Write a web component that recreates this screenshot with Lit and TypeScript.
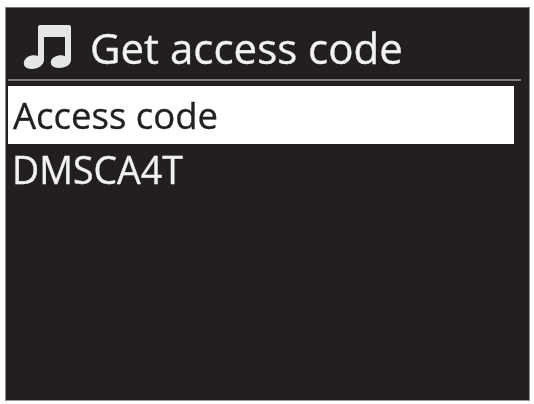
import { LitElement, html, css } from "lit";
import { customElement } from "lit/decorators.js";

@customElement("app-root")
export class AppRoot extends LitElement {
  static styles = css`
    :host { display: block; width: 534px; height: 404px; background: #fff; box-sizing: border-box; padding: 7px 4px 3px 5px; }
    .screen {
      height: 100%; box-sizing: border-box; background: #231f20; color: #f2f2f2;
      border: 1px solid #8a8a8a; border-top-color: #777; border-bottom-color: #999;
      font-family: "Open Sans", "Noto Sans", sans-serif;
      display: flex; flex-direction: column;
      padding: 0 8px 0 2px;
      -webkit-text-stroke: 0.35px currentColor;
    }
    .head { height: 71px; display: flex; align-items: center; gap: 17px; padding-left: 15px; box-sizing: border-box; }
    .head svg { width: 50px; height: 47px; flex: none; margin-top: 8px; filter: blur(0.6px); }
    .title { font-size: 42px; line-height: 44px; margin-top: 8px; white-space: nowrap; filter: blur(0.6px); }
    .rule { height: 2px; background: #7d7b7b; }
    .sel {
      margin-top: 5px; margin-right: 7px; height: 58px; background: #fff; color: #231f20;
      font-size: 36.5px; line-height: 58px; padding-left: 5px; box-sizing: border-box; white-space: nowrap;
    }
    .sel span, .val span { filter: blur(0.6px); display: inline-block; }
    .val { font-size: 37.5px; line-height: 44px; padding-left: 4px; margin-top: 4px; white-space: nowrap; }
  `;
  render() {
    return html`<div class="screen">
      <div class="head">
        <svg viewBox="0 0 50 47" aria-hidden="true">
          <path fill="#e6e6e6" d="M15 3 Q15 1 17 1 L46 1 Q48 1 48 3 L48 36 C48 41 42 44 36 44 C30 44 27 41 28 37 C29 33 36 30 42 32 L42 13 L21 13 L21 36 C21 41 15 45 9 45 C3 45 0 42 1 38 C2 33 9 30 15 32 Z"/>
        </svg>
        <div class="title">Get access code</div>
      </div>
      <div class="rule"></div>
      <div class="sel"><span>Access code</span></div>
      <div class="val"><span>DMSCA4T</span></div>
    </div>`;
  }
}
